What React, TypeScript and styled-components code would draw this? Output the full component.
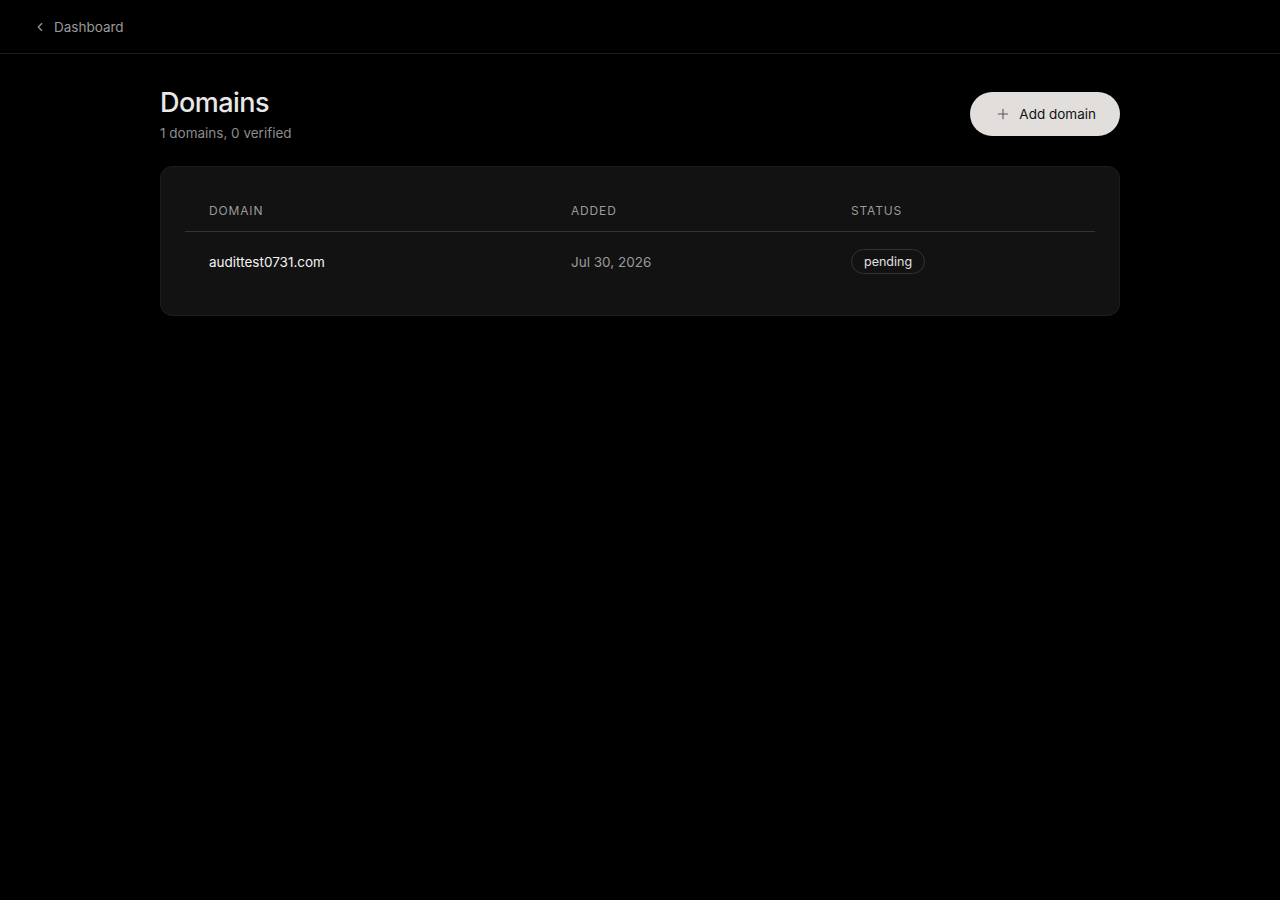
import { FC } from 'react';
import styled, { createGlobalStyle } from 'styled-components';

type DomainRow = {
  name: string;
  added: string;
  status: string;
};

const domains: DomainRow[] = [
  { name: 'audittest0731.com', added: 'Jul 30, 2026', status: 'pending' },
];

const GlobalStyle = createGlobalStyle`
  html, body {
    margin: 0;
    padding: 0;
    background: #000;
    min-height: 100%;
  }
  body {
    font-family: Inter, "Noto Sans", "Liberation Sans", sans-serif;
    color: #e6e6e6;
    -webkit-font-smoothing: antialiased;
  }
  * {
    box-sizing: border-box;
  }
`;

const Page = styled.div`
  min-height: 900px;
  background: #000;
`;

const TopBar = styled.header`
  height: 54px;
  display: flex;
  align-items: center;
  padding: 0 33px;
  border-bottom: 1px solid #1c1c1c;
`;

const BackLink = styled.a`
  display: flex;
  align-items: center;
  gap: 7px;
  font-size: 13.5px;
  color: #9a9a9a;
  text-decoration: none;
  cursor: pointer;
`;

const Main = styled.main`
  width: 960px;
  margin: 0 auto;
  padding-top: 31px;
  display: flex;
  flex-direction: column;
  gap: 23px;
`;

const HeadingRow = styled.div`
  display: flex;
  justify-content: space-between;
  align-items: flex-start;
`;

const TitleBlock = styled.div`
  display: flex;
  flex-direction: column;
  gap: 2px;
`;

const Title = styled.h1`
  margin: 0;
  font-size: 27px;
  line-height: 36px;
  font-weight: 500;
  letter-spacing: -0.02em;
  color: #e8e8e8;
`;

const Subtitle = styled.span`
  font-size: 13.5px;
  line-height: 20px;
  color: #8c8c8c;
`;

const AddButton = styled.button`
  margin-top: 7px;
  height: 44px;
  padding: 0 24px 0 26px;
  display: flex;
  align-items: center;
  gap: 9px;
  border: none;
  border-radius: 999px;
  background: #e1dedb;
  color: #111;
  font-family: inherit;
  font-size: 13.5px;
  cursor: pointer;
`;

const Card = styled.section`
  background: #121212;
  border: 1px solid #1d1d1d;
  border-radius: 12px;
  padding: 24px 24px 24px;
`;

const Grid = styled.div`
  display: grid;
  grid-template-columns: 362px 280px 1fr;
`;

const HeadCell = styled.div`
  padding: 12px 24px;
  font-size: 12px;
  line-height: 16px;
  letter-spacing: 0.07em;
  text-transform: uppercase;
  color: #9a9a9a;
  border-bottom: 1px solid #333;
`;

const Cell = styled.div<{ $primary?: boolean }>`
  padding: 17px 24px;
  min-height: 59px;
  display: flex;
  align-items: center;
  font-size: 13.5px;
  color: ${({ $primary }) => ($primary ? '#f2f2f2' : '#9a9a9a')};
  font-weight: 400;
`;

const StatusBadge = styled.span`
  display: inline-flex;
  align-items: center;
  height: 25px;
  padding: 0 12px;
  border: 1px solid #333;
  border-radius: 999px;
  font-size: 12.5px;
  color: #e0e0e0;
`;

const ChevronLeft: FC = () => (
  <svg width="14" height="14" viewBox="0 0 24 24" fill="none" stroke="#9a9a9a" strokeWidth="2" strokeLinecap="round" strokeLinejoin="round">
    <path d="m15 18-6-6 6-6" />
  </svg>
);

const PlusIcon: FC = () => (
  <svg width="14" height="14" viewBox="0 0 24 24" fill="none" stroke="#555" strokeWidth="1.8" strokeLinecap="round">
    <path d="M12 4v16M4 12h16" />
  </svg>
);

export default function App() {
  const verified = domains.filter((d) => d.status === 'verified').length;

  return (
    <Page>
      <GlobalStyle />
      <TopBar>
        <BackLink>
          <ChevronLeft />
          Dashboard
        </BackLink>
      </TopBar>

      <Main>
        <HeadingRow>
          <TitleBlock>
            <Title>Domains</Title>
            <Subtitle>{`${domains.length} domains, ${verified} verified`}</Subtitle>
          </TitleBlock>
          <AddButton>
            <PlusIcon />
            Add domain
          </AddButton>
        </HeadingRow>

        <Card>
          <Grid>
            <HeadCell>Domain</HeadCell>
            <HeadCell>Added</HeadCell>
            <HeadCell>Status</HeadCell>
            {domains.map((d) => (
              <>
                <Cell $primary>{d.name}</Cell>
                <Cell>{d.added}</Cell>
                <Cell>
                  <StatusBadge>{d.status}</StatusBadge>
                </Cell>
              </>
            ))}
          </Grid>
        </Card>
      </Main>
    </Page>
  );
}
